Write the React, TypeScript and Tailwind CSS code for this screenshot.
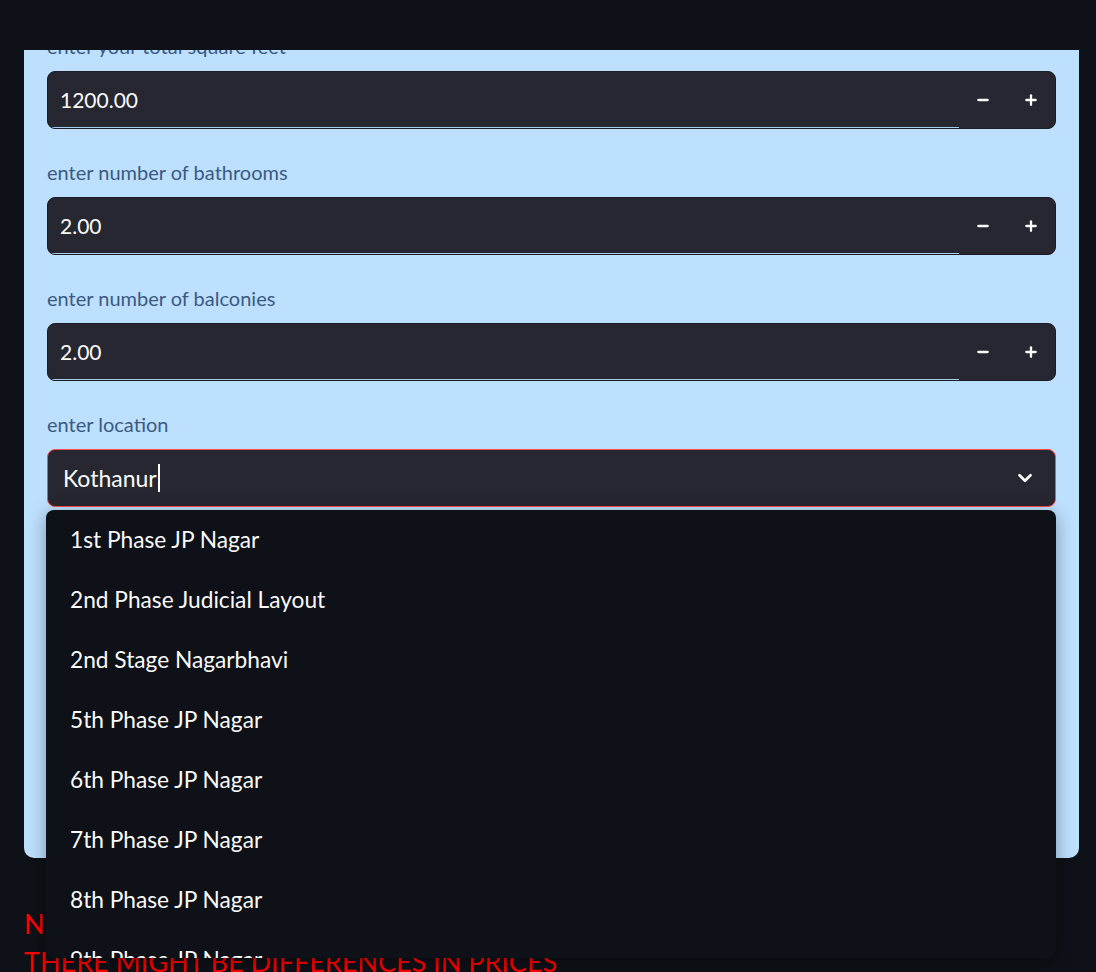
import { ChevronDown, Minus, Plus } from 'lucide-react'

const fields = [
    { label: 'enter your total square feet', value: '1200.00' },
    { label: 'enter number of bathrooms', value: '2.00' },
    { label: 'enter number of balconies', value: '2.00' },
]

const locations = [
    '1st Phase JP Nagar',
    '2nd Phase Judicial Layout',
    '2nd Stage Nagarbhavi',
    '5th Phase JP Nagar',
    '6th Phase JP Nagar',
    '7th Phase JP Nagar',
    '8th Phase JP Nagar',
    '9th Phase JP Nagar',
]

function NumberField({ label, value }: { label: string; value: string }) {
    return (
        <div className="flex flex-col">
            <label className="h-[26px] leading-[26px] text-[20px] text-[#3a5a82] mb-[12px]">{label}</label>
            <div className="flex h-[58px] rounded-[8px] border border-[#1c1d24] bg-[#262730] overflow-hidden">
                <div className="flex-1 flex items-center px-[12px] border-b border-[#a9cdef]">
                    <span className="text-[21px] text-[#fafafa]">{value}</span>
                </div>
                <button className="w-[48px] flex items-center justify-center text-[#fafafa]">
                    <Minus size={16} strokeWidth={3.5} />
                </button>
                <button className="w-[48px] flex items-center justify-center text-[#fafafa]">
                    <Plus size={16} strokeWidth={3.5} />
                </button>
            </div>
        </div>
    )
}

export default function App() {
    return (
        <div className="h-[972px] overflow-hidden bg-[#0e1117] font-['Lato',sans-serif]">
            <div className="h-[50px]" />
            <div className="ml-[24px] w-[1055px] h-[808px] bg-[#bde0fe] rounded-b-[10px]">
                <div className="h-full overflow-hidden rounded-b-[10px]">
                    <div className="mt-[-17px] px-[23px] flex flex-col gap-[30px]">
                        {fields.map((f) => (
                            <NumberField key={f.label} label={f.label} value={f.value} />
                        ))}
                        <div className="flex flex-col">
                            <label className="h-[26px] leading-[26px] text-[20px] text-[#3a5a82] mb-[12px]">enter location</label>
                            <div className="flex items-center h-[58px] rounded-[8px] border border-[#ff4b4b] bg-[#262730] pl-[15px] pr-[19px]">
                                <span className="text-[23px] text-[#fafafa]">Kothanur</span>
                                <span className="ml-[1px] w-[2px] h-[28px] bg-[#fafafa]" />
                                <ChevronDown className="ml-auto text-[#fafafa]" size={22} strokeWidth={3} />
                            </div>
                        </div>
                    </div>
                </div>
            </div>

            <div className="relative">
                <div className="absolute left-[46px] top-[-348px] w-[1010px] h-[448px] rounded-[8px] bg-[#0e1117] overflow-hidden shadow-[0_4px_18px_rgba(0,0,0,0.35)] z-10">
                    {locations.map((loc) => (
                        <div key={loc} className="h-[60px] flex items-center pl-[24px] text-[22.7px] text-[#fafafa]">
                            {loc}
                        </div>
                    ))}
                </div>
            </div>

            <div className="mt-[47px] pl-[24px] text-[27px] leading-[38px] text-[#ff0000] uppercase">
                <p>Note: this is just a prediction</p>
                <p>There might be differences in prices</p>
            </div>
        </div>
    )
}
